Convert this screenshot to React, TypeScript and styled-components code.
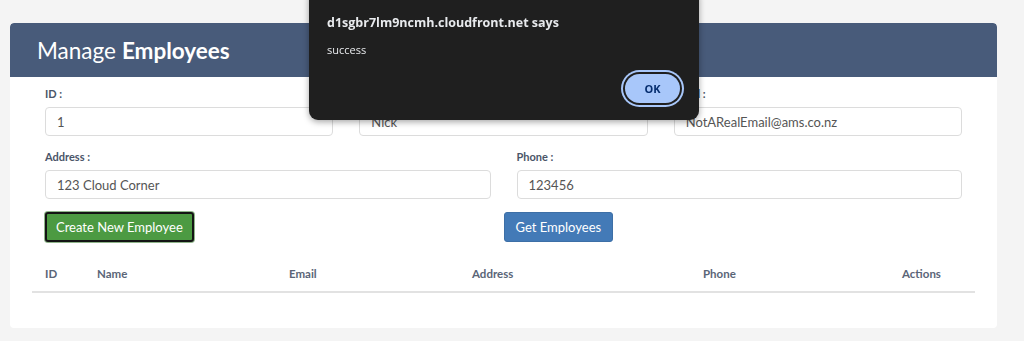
import React from "react";
import styled, { createGlobalStyle } from "styled-components";

const GlobalStyle = createGlobalStyle`
  html, body { margin: 0; padding: 0; }
  body {
    background: #f4f4f4;
    font-family: Lato, "Open Sans", sans-serif;
    width: 1024px;
    height: 341px;
    overflow: hidden;
  }
  * { box-sizing: border-box; }
`;

const Page = styled.div`
  padding: 23px 27px 14px 10px;
`;

const Card = styled.section`
  background: #ffffff;
  border-radius: 4px;
  overflow: hidden;
`;

const Header = styled.header`
  background: #485b7a;
  height: 54px;
  display: flex;
  align-items: center;
  padding-left: 27px;
  color: #ffffff;
  font-size: 22.5px;
  font-weight: 400;
  border-radius: 4px 4px 0 0;
`;

const Strong = styled.strong`
  font-weight: 700;
  margin-left: 6px;
`;

const Body = styled.div`
  padding: 11px 22px 35px 22px;
`;

const FormRow = styled.div<{ $cols: number; $gap: number }>`
  display: grid;
  grid-template-columns: repeat(${(p) => p.$cols}, 1fr);
  margin-bottom: ${(p) => p.$gap}px;
`;

const Field = styled.div`
  padding: 0 13px;
`;

const Label = styled.label`
  display: block;
  font-size: 11px;
  font-weight: 700;
  color: #4a5568;
  line-height: 12px;
  margin-bottom: 7px;
`;

const Input = styled.input`
  display: block;
  width: 100%;
  height: 29px;
  border: 1px solid #dcdcdc;
  border-radius: 4px;
  padding: 0 11px;
  font-family: Lato, "Open Sans", sans-serif;
  font-size: 13px;
  color: #555;
  background: #fff;
`;

const ButtonRow = styled.div`
  display: grid;
  grid-template-columns: 1fr 1fr;
`;

const ButtonCell = styled.div<{ $pad: number }>`
  padding-left: ${(p) => p.$pad}px;
`;

const Button = styled.button<{ $variant: "green" | "blue"; $focused?: boolean }>`
  height: 30px;
  padding: 0 ${(p) => (p.$focused ? 9 : 11)}px;
  border-radius: 3px;
  font-family: Lato, "Open Sans", sans-serif;
  font-size: 13px;
  color: #fff;
  cursor: pointer;
  background: ${(p) => (p.$variant === "green" ? "#4c9a42" : "#437ab7")};
  border: ${(p) => (p.$focused ? "2px solid #141414" : "1px solid #3d6fa6")};
  box-shadow: ${(p) => (p.$focused ? "0 0 0 1px #8fb58a" : "none")};
`;

const Table = styled.div`
  margin-top: 14px;
`;

const HeadRow = styled.div`
  display: grid;
  grid-template-columns: 52px 192px 183px 231px 199px 86px;
  height: 37px;
  align-items: center;
  border-bottom: 2px solid #e2e2e2;
`;

const Th = styled.div`
  padding: 0 13px;
  font-size: 11.5px;
  font-weight: 700;
  color: #5a6577;
`;

const Dialog = styled.div`
  position: fixed;
  left: 309px;
  top: -12px;
  width: 390px;
  height: 132px;
  background: #1f1f1f;
  border-radius: 9px;
  box-shadow: 0 2px 6px rgba(0, 0, 0, 0.35);
  padding: 26px 15px 0 18px;
  display: flex;
  flex-direction: column;
  font-family: "Open Sans", "Noto Sans", sans-serif;
`;

const DialogTitle = styled.div`
  color: #e8eaed;
  font-size: 12.5px;
  font-weight: 700;
  line-height: 18px;
`;

const DialogMessage = styled.div`
  color: #e8eaed;
  font-size: 11px;
  line-height: 14px;
  margin-top: 11px;
`;

const DialogActions = styled.div`
  display: flex;
  justify-content: flex-end;
  margin-top: 17px;
  padding-right: 4px;
`;

const OkButton = styled.button`
  width: 55px;
  height: 29px;
  border-radius: 15px;
  border: none;
  background: #a8c7fa;
  color: #062e6f;
  font-family: "Open Sans", "Noto Sans", sans-serif;
  font-size: 11px;
  font-weight: 700;
  box-shadow: 0 0 0 2px #1f1f1f, 0 0 0 4px #a8c7fa;
`;

export default function App() {
  const heads = ["ID", "Name", "Email", "Address", "Phone", "Actions"];
  return (
    <>
      <GlobalStyle />
      <Page>
        <Card>
          <Header>
            Manage<Strong>Employees</Strong>
          </Header>
          <Body>
            <FormRow $cols={3} $gap={15}>
              <Field>
                <Label>ID :</Label>
                <Input defaultValue="1" />
              </Field>
              <Field>
                <Label>Name :</Label>
                <Input defaultValue="Nick" />
              </Field>
              <Field>
                <Label>Email :</Label>
                <Input defaultValue="NotARealEmail@ams.co.nz" />
              </Field>
            </FormRow>
            <FormRow $cols={2} $gap={13}>
              <Field>
                <Label>Address :</Label>
                <Input defaultValue="123 Cloud Corner" />
              </Field>
              <Field>
                <Label>Phone :</Label>
                <Input defaultValue="123456" />
              </Field>
            </FormRow>
            <ButtonRow>
              <ButtonCell $pad={13}>
                <Button $variant="green" $focused>
                  Create New Employee
                </Button>
              </ButtonCell>
              <ButtonCell $pad={0}>
                <Button $variant="blue">Get Employees</Button>
              </ButtonCell>
            </ButtonRow>
            <Table>
              <HeadRow>
                {heads.map((h) => (
                  <Th key={h}>{h}</Th>
                ))}
              </HeadRow>
            </Table>
          </Body>
        </Card>
      </Page>
      <Dialog>
        <DialogTitle>d1sgbr7lm9ncmh.cloudfront.net says</DialogTitle>
        <DialogMessage>success</DialogMessage>
        <DialogActions>
          <OkButton>OK</OkButton>
        </DialogActions>
      </Dialog>
    </>
  );
}
